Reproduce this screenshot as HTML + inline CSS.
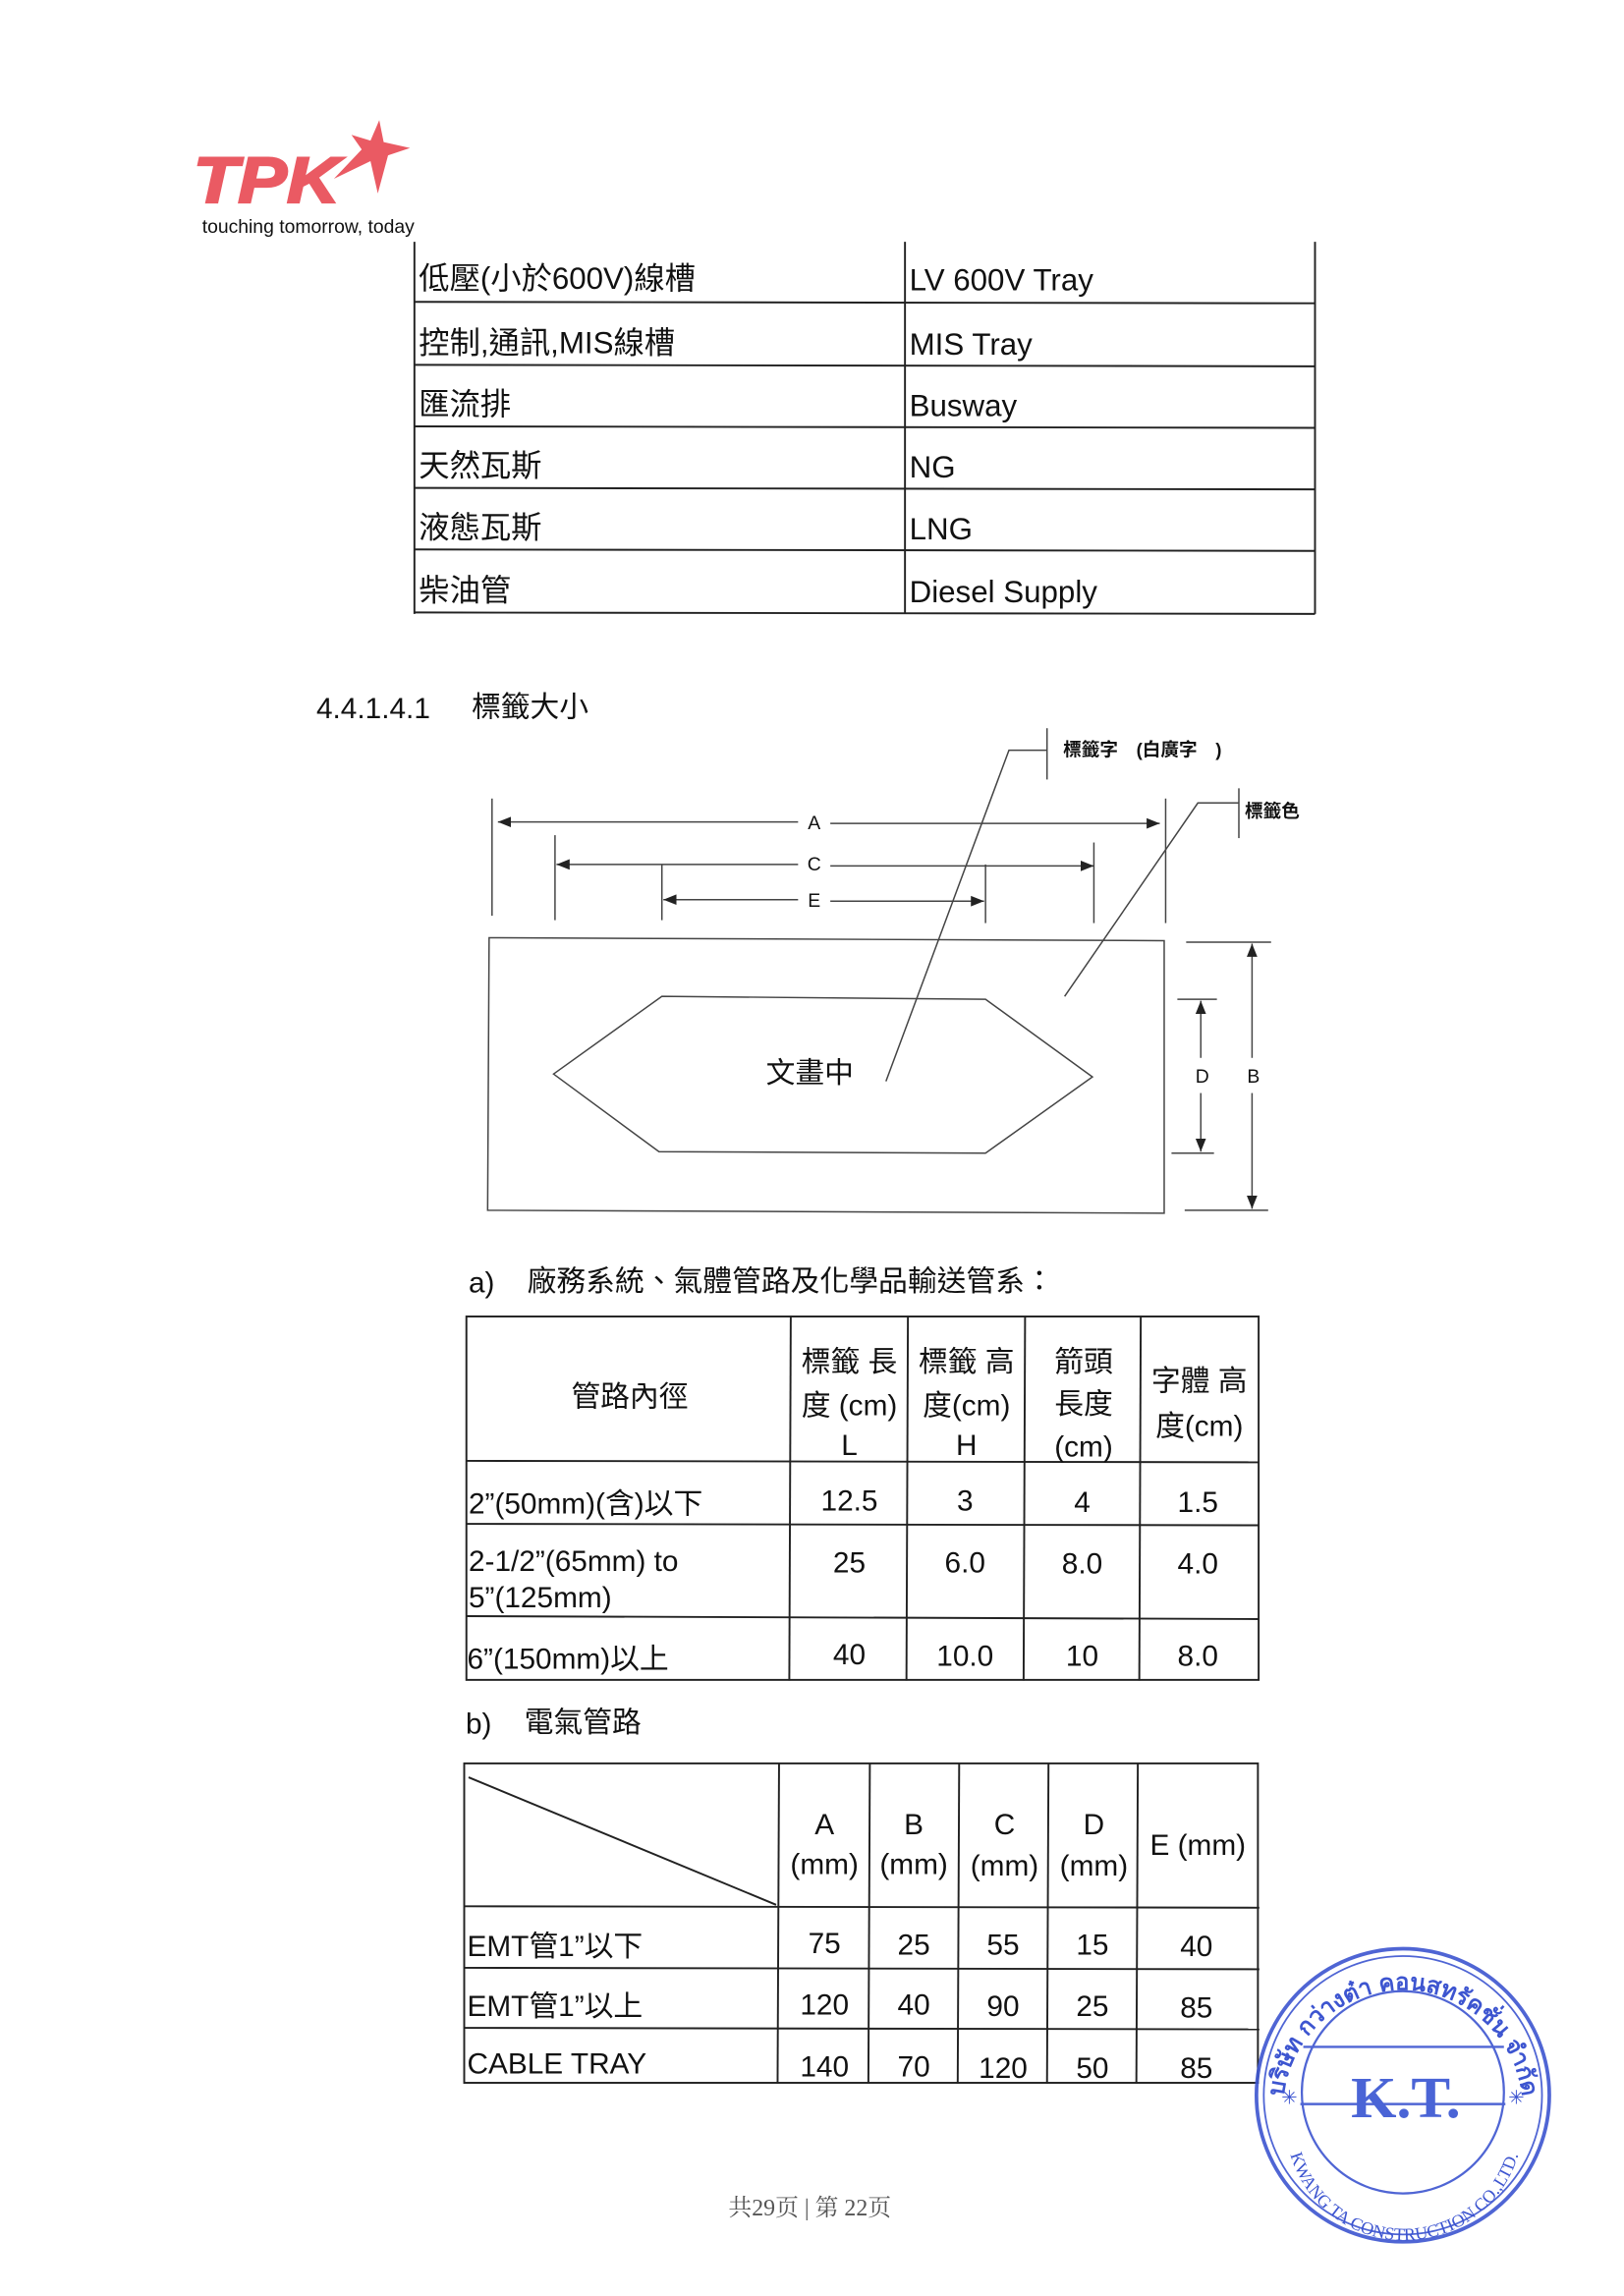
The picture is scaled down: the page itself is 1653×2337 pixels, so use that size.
<!DOCTYPE html>
<html><head><meta charset="utf-8"><style>
html,body{margin:0;padding:0;background:#fff;}
svg{display:block;}
text{font-family:"Liberation Sans","Noto Sans CJK TC",sans-serif;fill:#111;}
</style></head><body>
<svg width="1653" height="2337" viewBox="0 0 1109 1567" preserveAspectRatio="none" xmlns="http://www.w3.org/2000/svg">
<defs>
<marker id="ar" viewBox="0 0 10 10" refX="10" refY="5" markerWidth="9" markerHeight="9" orient="auto-start-reverse" markerUnits="userSpaceOnUse"><path d="M0,1 L10,5 L0,9 z" fill="#222"/></marker>
<path id="stampTop" d="M876,1440 A82,82 0 0 1 1040,1440"/>
<path id="stampBot" d="M878,1448 A80,80 0 0 0 1040,1448"/>
</defs>

<!-- Logo -->
<text x="132" y="138" font-size="44" font-weight="900" font-style="italic" style="fill:#ea5a63" textLength="100" lengthAdjust="spacingAndGlyphs" stroke="#ea5a63" stroke-width="1.5">TPK</text>
<path d="M259,82 L262,97 L280,101 L265,106 L258,132 L253,110 L228,122 L247,102 L240,92 L253,96 Z" fill="#ea5a63"/>
<text x="138" y="159" font-size="13" textLength="145" lengthAdjust="spacingAndGlyphs">touching tomorrow, today</text>

<!-- Table 1 -->
<g stroke="#222" stroke-width="1.3" fill="none">
<line x1="283" y1="165" x2="283" y2="419"/>
<line x1="618" y1="165" x2="618" y2="419"/>
<line x1="898" y1="165" x2="898" y2="419"/>
<line x1="283" y1="206" x2="898" y2="207"/>
<line x1="283" y1="249" x2="898" y2="250"/>
<line x1="283" y1="291" x2="898" y2="292"/>
<line x1="283" y1="333" x2="898" y2="334"/>
<line x1="283" y1="375" x2="898" y2="376"/>
<line x1="283" y1="418" x2="898" y2="419"/>
</g>
<g font-size="21">
<text x="286" y="197">低壓(小於600V)線槽</text><text x="621" y="198">LV 600V Tray</text>
<text x="286" y="241">控制,通訊,MIS線槽</text><text x="621" y="242">MIS Tray</text>
<text x="286" y="283">匯流排</text><text x="621" y="284">Busway</text>
<text x="286" y="325">天然瓦斯</text><text x="621" y="326">NG</text>
<text x="286" y="367">液態瓦斯</text><text x="621" y="368">LNG</text>
<text x="286" y="410">柴油管</text><text x="621" y="411">Diesel Supply</text>
</g>

<text x="216" y="490" font-size="20">4.4.1.4.1</text>
<text x="322" y="489" font-size="20">標籤大小</text>

<!-- Diagram -->
<g stroke="#444" stroke-width="1" fill="none">
<line x1="336" y1="545" x2="336" y2="625"/>
<line x1="796" y1="545" x2="796" y2="630"/>
<line x1="379" y1="570" x2="379" y2="628"/>
<line x1="747" y1="575" x2="747" y2="630"/>
<line x1="452" y1="590" x2="452" y2="628"/>
<line x1="673" y1="590" x2="673" y2="630"/>
<line x1="340" y1="561" x2="545" y2="561" marker-start="url(#ar)"/>
<line x1="567" y1="562" x2="792" y2="562" marker-end="url(#ar)"/>
<line x1="380" y1="590" x2="545" y2="590" marker-start="url(#ar)"/>
<line x1="567" y1="591" x2="747" y2="591" marker-end="url(#ar)"/>
<line x1="453" y1="614" x2="545" y2="614" marker-start="url(#ar)"/>
<line x1="567" y1="615" x2="672" y2="615" marker-end="url(#ar)"/>
<path d="M334,640 L795,642 L795,828 L333,826 Z"/>
<path d="M378,733 L452,680 L673,682 L746,735 L673,787 L450,786 Z"/>
<line x1="810" y1="643" x2="868" y2="643"/>
<line x1="809" y1="826" x2="866" y2="826"/>
<line x1="855" y1="644" x2="855" y2="722" marker-start="url(#ar)"/>
<line x1="855" y1="746" x2="855" y2="825" marker-end="url(#ar)"/>
<line x1="804" y1="682" x2="831" y2="682"/>
<line x1="800" y1="787" x2="829" y2="787"/>
<line x1="820" y1="683" x2="820" y2="722" marker-start="url(#ar)"/>
<line x1="820" y1="746" x2="820" y2="786" marker-end="url(#ar)"/>
<line x1="715" y1="497" x2="715" y2="532"/>
<polyline points="715,512 689,512 605,738"/>
<line x1="846" y1="538" x2="846" y2="572"/>
<polyline points="846,548 818,548 727,680"/>
</g>
<g font-size="13" text-anchor="middle">
<text x="556" y="566">A</text><text x="556" y="594">C</text><text x="556" y="619">E</text>
<text x="821" y="739">D</text><text x="856" y="739">B</text>
</g>
<text x="726" y="516" font-size="12.5" font-weight="bold">標籤字　(白廣字　)</text>
<text x="850" y="558" font-size="12.5" font-weight="bold">標籤色</text>
<text x="553" y="739" font-size="20" text-anchor="middle">文畫中</text>

<!-- Section a -->
<text x="320" y="882" font-size="20">a)</text>
<text x="360" y="881" font-size="20">廠務系統、氣體管路及化學品輸送管系：</text>
<g stroke="#222" stroke-width="1.3" fill="none">
<rect x="318.5" y="898.5" width="541" height="248"/>
<line x1="540" y1="898" x2="539" y2="1147"/>
<line x1="620" y1="898" x2="619" y2="1147"/>
<line x1="700" y1="898" x2="699" y2="1147"/>
<line x1="779" y1="898" x2="778" y2="1147"/>
<line x1="318" y1="997" x2="860" y2="998"/>
<line x1="318" y1="1040" x2="860" y2="1041"/>
<line x1="318" y1="1103" x2="860" y2="1105"/>
</g>
<g font-size="20" text-anchor="middle">
<text x="430" y="960">管路內徑</text>
<text x="580" y="936">標籤 長</text><text x="580" y="966">度 (cm)</text><text x="580" y="993">L</text>
<text x="660" y="936">標籤 高</text><text x="660" y="966">度(cm)</text><text x="660" y="993">H</text>
<text x="740" y="936">箭頭</text><text x="740" y="965">長度</text><text x="740" y="994">(cm)</text>
<text x="819" y="949">字體 高</text><text x="819" y="980">度(cm)</text>
<text x="580" y="1031">12.5</text><text x="659" y="1031">3</text><text x="739" y="1032">4</text><text x="818" y="1032">1.5</text>
<text x="580" y="1073">25</text><text x="659" y="1073">6.0</text><text x="739" y="1074">8.0</text><text x="818" y="1074">4.0</text>
<text x="580" y="1136">40</text><text x="659" y="1137">10.0</text><text x="739" y="1137">10</text><text x="818" y="1137">8.0</text>
</g>
<g font-size="20">
<text x="320" y="1033">2”(50mm)(含)以下</text>
<text x="320" y="1072">2-1/2”(65mm) to</text>
<text x="320" y="1097">5”(125mm)</text>
<text x="319" y="1139">6”(150mm)以上</text>
</g>

<!-- Section b -->
<text x="318" y="1183" font-size="20">b)</text>
<text x="358" y="1182" font-size="20">電氣管路</text>
<g stroke="#222" stroke-width="1.3" fill="none">
<rect x="317" y="1203.5" width="542" height="218"/>
<line x1="532" y1="1203" x2="531" y2="1422"/>
<line x1="594" y1="1203" x2="593" y2="1422"/>
<line x1="655" y1="1203" x2="654" y2="1422"/>
<line x1="716" y1="1203" x2="715" y2="1422"/>
<line x1="777" y1="1203" x2="776" y2="1422"/>
<line x1="317" y1="1301" x2="860" y2="1302"/>
<line x1="317" y1="1343" x2="860" y2="1344"/>
<line x1="317" y1="1384" x2="860" y2="1385"/>
<line x1="320" y1="1213" x2="530" y2="1300"/>
</g>
<g font-size="20" text-anchor="middle">
<text x="563" y="1252">A</text><text x="563" y="1279">(mm)</text>
<text x="624" y="1252">B</text><text x="624" y="1279">(mm)</text>
<text x="686" y="1252">C</text><text x="686" y="1280">(mm)</text>
<text x="747" y="1252">D</text><text x="747" y="1280">(mm)</text>
<text x="818" y="1266">E (mm)</text>
<text x="563" y="1333">75</text><text x="624" y="1334">25</text><text x="685" y="1334">55</text><text x="746" y="1334">15</text><text x="817" y="1335">40</text>
<text x="563" y="1375">120</text><text x="624" y="1375">40</text><text x="685" y="1376">90</text><text x="746" y="1376">25</text><text x="817" y="1377">85</text>
<text x="563" y="1417">140</text><text x="624" y="1417">70</text><text x="685" y="1418">120</text><text x="746" y="1418">50</text><text x="817" y="1418">85</text>
</g>
<g font-size="20">
<text x="319" y="1335">EMT管1”以下</text>
<text x="319" y="1376">EMT管1”以上</text>
<text x="319" y="1415">CABLE TRAY</text>
</g>

<!-- Footer -->
<text x="553" y="1512" font-size="16" text-anchor="middle" style="font-family:'Liberation Serif','Noto Serif CJK SC',serif;fill:#555">共29页 | 第 22页</text>

<!-- Stamp -->
<g stroke="#3d55d0" fill="none" opacity="0.9">
<circle cx="958" cy="1430" r="100" stroke-width="2.5"/>
<circle cx="958" cy="1430" r="95" stroke-width="1.2"/>
<circle cx="958" cy="1428" r="69" stroke-width="1.5"/>
<line x1="890" y1="1397" x2="1027" y2="1397" stroke-width="1.6"/>
<line x1="888" y1="1436" x2="1028" y2="1436" stroke-width="1.6"/>
</g>
<text x="960" y="1445" font-size="40" font-weight="bold" text-anchor="middle" style="font-family:'Liberation Serif',serif;fill:#4a64d6">K.T.</text>
<text font-size="16" font-weight="bold" style="fill:#3d55d0;font-family:'Liberation Sans','DejaVu Sans',sans-serif"><textPath href="#stampTop" startOffset="50%" text-anchor="middle">บริษัท กว่างต๋า คอนสทรัคชั่น จำกัด</textPath></text>
<text font-size="12" style="fill:#3d55d0;font-family:'Liberation Serif',serif"><textPath href="#stampBot" startOffset="50%" text-anchor="middle">KWANG TA CONSTRUCTION CO.,LTD.</textPath></text>
<text x="875" y="1436" font-size="13" style="fill:#3d55d0">✳</text>
<text x="1030" y="1436" font-size="13" style="fill:#3d55d0">✳</text>
</svg>
</body></html>
